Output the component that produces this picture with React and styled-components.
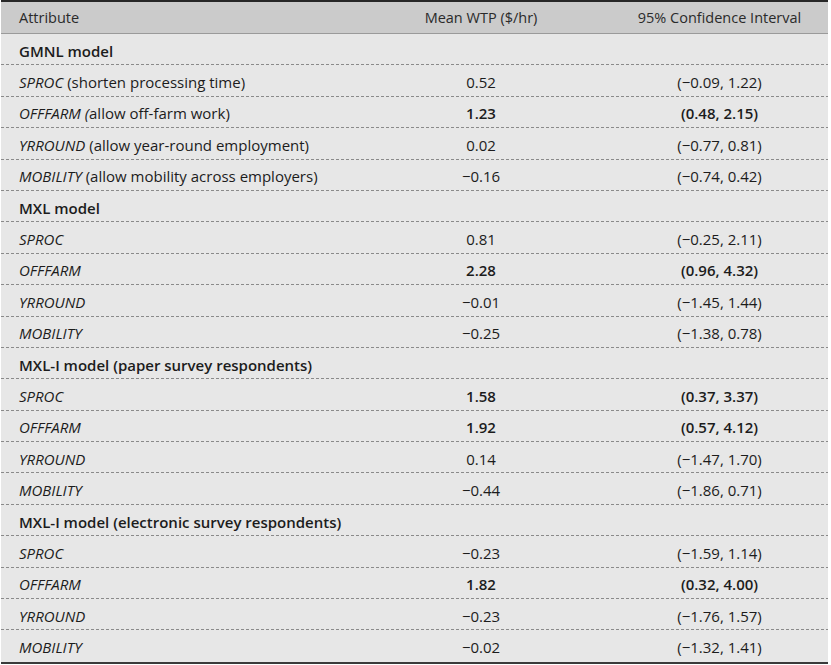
import styled, { createGlobalStyle } from "styled-components";

const GlobalStyle = createGlobalStyle`
  body {
    margin: 0;
    background: #ffffff;
    font-family: "Open Sans", "Noto Sans", sans-serif;
    color: #1c1c1c;
  }
`;

const sections = [
  {
    title: "GMNL model",
    rows: [
      { name: "SPROC", note: " (shorten processing time)", mean: "0.52", ci: "(−0.09, 1.22)" },
      { name: "OFFFARM (", note: "allow off-farm work)", mean: "1.23", ci: "(0.48, 2.15)", sig: true },
      { name: "YRROUND", note: " (allow year-round employment)", mean: "0.02", ci: "(−0.77, 0.81)" },
      { name: "MOBILITY", note: " (allow mobility across employers)", mean: "−0.16", ci: "(−0.74, 0.42)" },
    ],
  },
  {
    title: "MXL model",
    rows: [
      { name: "SPROC", mean: "0.81", ci: "(−0.25, 2.11)" },
      { name: "OFFFARM", mean: "2.28", ci: "(0.96, 4.32)", sig: true },
      { name: "YRROUND", mean: "−0.01", ci: "(−1.45, 1.44)" },
      { name: "MOBILITY", mean: "−0.25", ci: "(−1.38, 0.78)" },
    ],
  },
  {
    title: "MXL-I model (paper survey respondents)",
    rows: [
      { name: "SPROC", mean: "1.58", ci: "(0.37, 3.37)", sig: true },
      { name: "OFFFARM", mean: "1.92", ci: "(0.57, 4.12)", sig: true },
      { name: "YRROUND", mean: "0.14", ci: "(−1.47, 1.70)" },
      { name: "MOBILITY", mean: "−0.44", ci: "(−1.86, 0.71)" },
    ],
  },
  {
    title: "MXL-I model (electronic survey respondents)",
    rows: [
      { name: "SPROC", mean: "−0.23", ci: "(−1.59, 1.14)" },
      { name: "OFFFARM", mean: "1.82", ci: "(0.32, 4.00)", sig: true },
      { name: "YRROUND", mean: "−0.23", ci: "(−1.76, 1.57)" },
      { name: "MOBILITY", mean: "−0.02", ci: "(−1.32, 1.41)" },
    ],
  },
];

const App = () => {
  return (
    <>
      <GlobalStyle />
      <Table>
        <HeadRow>
          <AttrCell>Attribute</AttrCell>
          <ValueCell>Mean WTP ($/hr)</ValueCell>
          <ValueCell>95% Confidence Interval</ValueCell>
        </HeadRow>
        {sections.map((section) => (
          <Section key={section.title}>
            <Row>
              <SectionTitle>{section.title}</SectionTitle>
            </Row>
            {section.rows.map((row) => (
              <Row key={row.name}>
                <AttrCell>
                  <em>{row.name}</em>
                  {row.note || ""}
                </AttrCell>
                <ValueCell $bold={row.sig}>{row.mean}</ValueCell>
                <ValueCell $bold={row.sig}>{row.ci}</ValueCell>
              </Row>
            ))}
          </Section>
        ))}
      </Table>
    </>
  );
};

const Table = styled.div`
  margin: 0 3px 0 1px;
  background: #e7e7e7;
  border-top: 2px solid #262626;
  border-bottom: 2px solid #3a3a3a;
  font-size: 15px;
`;

const Grid = styled.div`
  display: grid;
  grid-template-columns: 350px 260px 1fr;
  align-items: center;
`;

const HeadRow = styled(Grid)`
  height: 31px;
  background: #cbcbcb;
  border-bottom: 1px solid #9a9a9a;
  color: #2a2a2a;
  font-size: 14.5px;
`;

const Section = styled.div`
  &:last-child > div:last-child {
    background-image: none;
  }
`;

const Row = styled(Grid)`
  height: 31.4px;
  box-sizing: border-box;
  padding-top: 2px;
  background-image: linear-gradient(to right, #8a8a8a 60%, transparent 60%);
  background-size: 5px 1px;
  background-repeat: repeat-x;
  background-position: left bottom;
`;

const AttrCell = styled.div`
  padding-left: 18px;
  white-space: nowrap;
`;

const SectionTitle = styled(AttrCell)`
  grid-column: 1 / -1;
  font-weight: 600;
`;

const ValueCell = styled.div`
  text-align: center;
  white-space: nowrap;
  font-weight: ${(p) => (p.$bold ? 600 : 400)};
`;

export default App;
